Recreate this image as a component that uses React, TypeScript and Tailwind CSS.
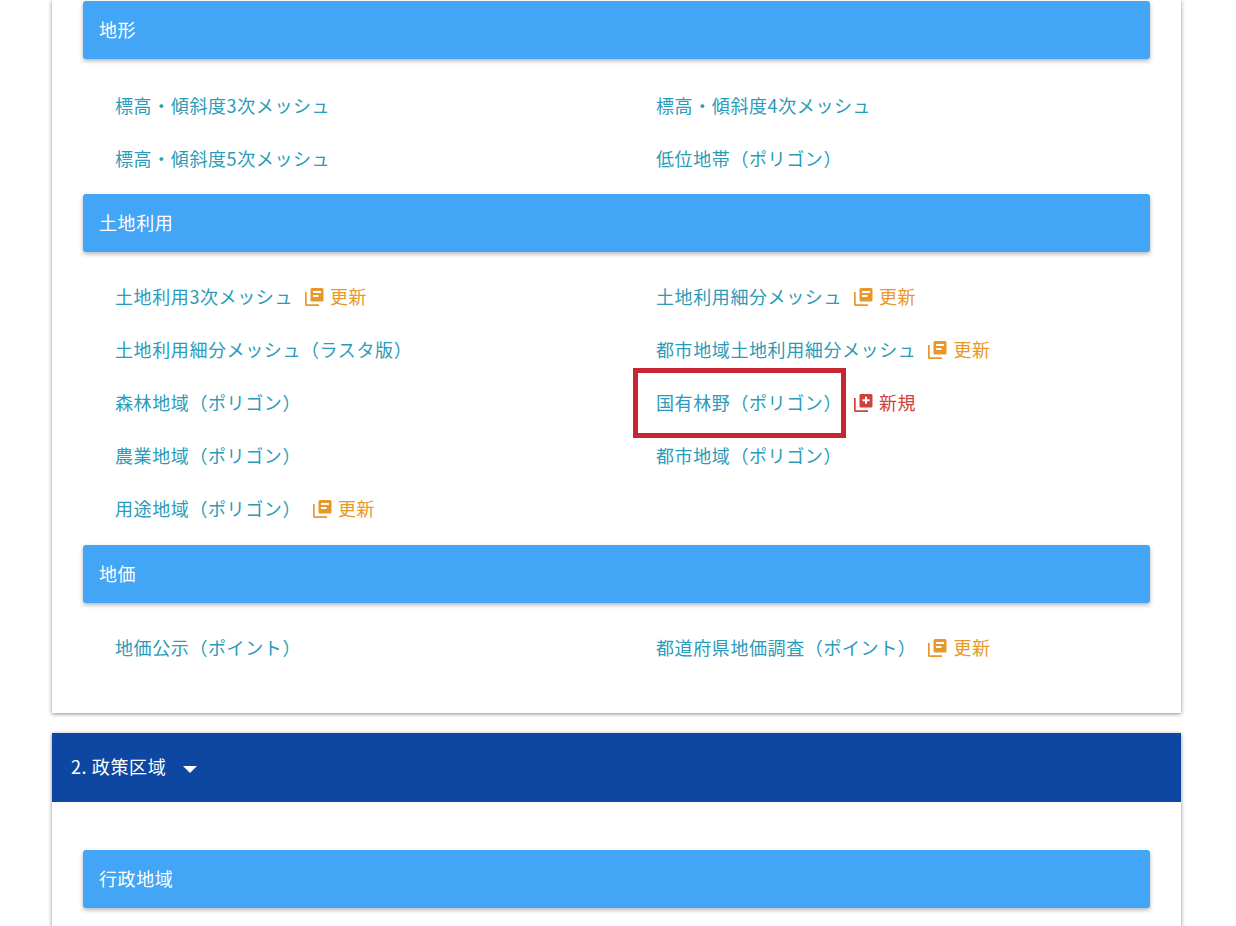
type Item = { name: string; tag?: "update" | "new"; marked?: boolean };

// hand drawn: stack icon with a back "L" and a front square
function StackIcon({ kind }: { kind: "update" | "new" }) {
  return (
    <svg viewBox="0 0 20 20" width="20" height="20" fill="currentColor">
      <path d="M1 5h1.7v12.3H15V19H2.5A1.5 1.5 0 0 1 1 17.5z" />
      <rect x="6.5" y="1" width="13" height="13.5" rx="1.5" />
      {kind === "update" ? (
        <>
          <rect x="9" y="4" width="8" height="2" fill="#fff" />
          <rect x="9" y="8" width="5.5" height="2" fill="#fff" />
        </>
      ) : (
        <path d="M12 3.8h2v2.5h2.6v2H14v2.5h-2V8.300H9.400v-2H12z" fill="#fff" />
      )}
    </svg>
  );
}

function Tag({ kind }: { kind: "update" | "new" }) {
  return (
    <span className={kind === "new" ? "ml-[11px] flex items-center text-[#d2403c]" : "ml-[11px] flex items-center text-[#e8982a]"}>
      <StackIcon kind={kind} />
      <span className="ml-[6px]">{kind === "new" ? "新規" : "更新"}</span>
    </span>
  );
}

function Row({ item }: { item: Item }) {
  return (
    <div className="relative flex h-[53px] items-center">
      <span className="text-[#2a9bb8]">{item.name}</span>
      {item.tag && <Tag kind={item.tag} />}
      {item.marked && (
        <div className="absolute left-[-23px] top-[-8px] h-[70px] w-[213px] border-[5px] border-[#c62631]" />
      )}
    </div>
  );
}

function Bar({ title }: { title: string }) {
  return (
    <div className="flex h-[58px] items-center rounded-[3px] bg-[#42a5f5] pb-[2px] pl-4 text-white shadow-[0_2px_4px_rgba(0,0,0,0.3)]">
      {title}
    </div>
  );
}

function Section({ title, items, first }: { title: string; items: Item[]; first?: boolean }) {
  return (
    <section>
      <Bar title={title} />
      <div className={first ? "grid grid-cols-[541px_1fr] pb-[9px] pl-8 pt-[20px]" : "grid grid-cols-[541px_1fr] pb-[10px] pl-8 pt-[18px]"}>
        {items.map((item) => (
          <Row key={item.name} item={item} />
        ))}
      </div>
    </section>
  );
}

export default function App() {
  return (
    <div
      className="h-[926px] overflow-hidden bg-white text-[18px] tracking-[0.6px]"
      style={{ fontFamily: '"Noto Sans CJK JP", "Noto Sans", sans-serif', fontWeight: 400 }}
    >
      <div className="ml-[52px] w-[1129px]">
        <div className="bg-white px-[31px] pt-[1px] pb-[29px] shadow-[0_1px_4px_rgba(0,0,0,0.45)]">
          <Section
            first
            title="地形"
            items={[
              { name: "標高・傾斜度3次メッシュ" },
              { name: "標高・傾斜度4次メッシュ" },
              { name: "標高・傾斜度5次メッシュ" },
              { name: "低位地帯（ポリゴン）" },
            ]}
          />
          <Section
            title="土地利用"
            items={[
              { name: "土地利用3次メッシュ", tag: "update" },
              { name: "土地利用細分メッシュ", tag: "update" },
              { name: "土地利用細分メッシュ（ラスタ版）" },
              { name: "都市地域土地利用細分メッシュ", tag: "update" },
              { name: "森林地域（ポリゴン）" },
              { name: "国有林野（ポリゴン）", tag: "new", marked: true },
              { name: "農業地域（ポリゴン）" },
              { name: "都市地域（ポリゴン）" },
              { name: "用途地域（ポリゴン）", tag: "update" },
            ]}
          />
          <Section
            title="地価"
            items={[
              { name: "地価公示（ポイント）" },
              { name: "都道府県地価調査（ポイント）", tag: "update" },
            ]}
          />
        </div>
        <div className="mt-5 shadow-[0_1px_4px_rgba(0,0,0,0.45)]">
          <div className="flex h-[69px] items-center bg-[#0d47a1] pb-[2px] pl-[19px] text-white">
            <span>2. 政策区域</span>
            <span className="ml-[17px] mt-[5px] h-0 w-0 border-x-[7px] border-t-[7px] border-x-transparent border-t-white" />
          </div>
          <div className="bg-white px-[31px] pb-10 pt-12">
            <Bar title="行政地域" />
          </div>
        </div>
      </div>
    </div>
  );
}
